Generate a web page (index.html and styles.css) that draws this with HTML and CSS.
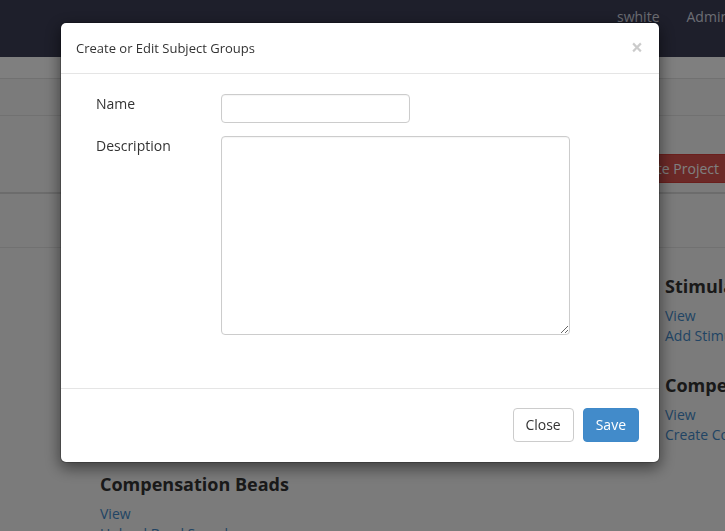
FILE: index.html
```html
<!DOCTYPE html>
<html lang="en">
<head>
<meta charset="utf-8">
<title>Create or Edit Subject Groups</title>
<link rel="stylesheet" href="styles.css">
</head>
<body>
<div class="page">
  <header class="navbar">
    <ul class="nav-right">
      <li><a href="#">swhite</a></li>
      <li><a href="#">Admin</a></li>
    </ul>
  </header>
  <div class="subbar"></div>
  <div class="crumbs"></div>
  <div class="title-area">
    <div class="title-row">
      <h1 class="page-title">Project</h1>
      <button class="btn btn-danger" type="button">Delete Project</button>
    </div>
  </div>
  <div class="tabs"></div>
  <main class="content">
    <div class="col">
      <section class="group">
        <h3>Subjects</h3>
        <a href="#">View</a>
        <a href="#">Add Subject</a>
      </section>
      <section class="group">
        <h3>Samples</h3>
        <a href="#">View</a>
        <a href="#">Add Sample</a>
      </section>
      <section class="group">
        <h3>Compensation Beads</h3>
        <a href="#">View</a>
        <a href="#">Upload Bead Samples</a>
      </section>
    </div>
    <div class="col">
      <section class="group">
        <h3>Sites</h3>
        <a href="#">View</a>
        <a href="#">Add Site</a>
      </section>
      <section class="group">
        <h3>Panels</h3>
        <a href="#">View</a>
        <a href="#">Add Panel</a>
      </section>
    </div>
    <div class="col">
      <section class="group">
        <h3>Stimulations</h3>
        <a href="#">View</a>
        <a href="#">Add Stimulation</a>
      </section>
      <section class="group">
        <h3>Compensations</h3>
        <a href="#">View</a>
        <a href="#">Create Compensation</a>
      </section>
    </div>
  </main>
</div>

<div class="backdrop"></div>
<div class="modal" role="dialog">
  <div class="modal-header">
    <h4 class="modal-title">Create or Edit Subject Groups</h4>
    <button class="close" type="button" aria-label="Close">&times;</button>
  </div>
  <form class="modal-body">
    <label class="form-label" for="name">Name</label>
    <input class="form-input" id="name" type="text">
    <label class="form-label" for="desc">Description</label>
    <textarea class="form-textarea" id="desc"></textarea>
  </form>
  <div class="modal-footer">
    <button class="btn btn-default" type="button">Close</button>
    <button class="btn btn-primary" type="button">Save</button>
  </div>
</div>
</body>
</html>
```

FILE: styles.css
```css
html, body {
  margin: 0;
  padding: 0;
  overflow: hidden;
  height: 100%;
}
body {
  font-family: "Open Sans", "DejaVu Sans", sans-serif;
  font-size: 14px;
  line-height: 20px;
  color: #333;
  background: #f6f6f6;
}
.page {
  width: 1000px;
}
.navbar {
  height: 57px;
  background: #3c3e56;
}
.nav-right {
  list-style: none;
  margin: 0 0 0 617px;
  padding: 7px 0 0;
  display: flex;
  gap: 27px;
}
.nav-right a {
  color: #d8dae4;
  text-decoration: none;
  font-size: 14px;
}
.subbar {
  height: 21px;
  background: #ffffff;
  border-bottom: 1px solid #e2e2e2;
}
.crumbs {
  height: 36px;
  border-bottom: 1px solid #e2e2e2;
}
.title-area {
  height: 76px;
  border-bottom: 2px solid #d8d8d8;
}
.title-row {
  width: 632px;
  padding: 38px 0 0 100px;
  display: flex;
  align-items: center;
  justify-content: space-between;
}
.page-title {
  margin: 0;
  font-size: 24px;
  line-height: 29px;
  font-weight: 700;
}
.btn {
  font-family: "Open Sans", "DejaVu Sans", sans-serif;
  font-size: 14px;
  line-height: 20px;
  padding: 6px 12px;
  border-radius: 4px;
  border: 1px solid transparent;
  cursor: pointer;
}
.btn-danger {
  background: #d9534f;
  border-color: #d43f3a;
  color: #fff;
  line-height: 19px;
  padding: 4px 12px;
  border-radius: 3px 0 0 3px;
}
.tabs {
  height: 53px;
  border-bottom: 1px solid #e2e2e2;
}
.content {
  display: grid;
  grid-template-columns: repeat(3, 282.5px);
  padding: 28px 0 0 100px;
}
.group {
  display: flex;
  flex-direction: column;
  margin-bottom: 29px;
}
.group:last-child {
  margin-bottom: 0;
}
.group h3 {
  margin: 0 0 10px;
  font-size: 18px;
  line-height: 20px;
  font-weight: 700;
  color: #333;
}
.group a {
  color: #4289c8;
  text-decoration: none;
  line-height: 20px;
}

.backdrop {
  position: fixed;
  inset: 0;
  background: rgba(0, 0, 0, 0.5);
}
.modal {
  position: fixed;
  top: 22px;
  left: 60px;
  width: 598px;
  background: #fff;
  border: 1px solid rgba(0, 0, 0, 0.2);
  border-radius: 6px;
  box-shadow: 0 5px 15px rgba(0, 0, 0, 0.5);
  background-clip: padding-box;
}
.modal-header {
  display: flex;
  align-items: center;
  justify-content: space-between;
  padding: 16px 16px 15px 15px;
  border-bottom: 1px solid #e5e5e5;
}
.modal-title {
  margin: 0;
  font-size: 13px;
  line-height: 19px;
  font-weight: 400;
  color: #333;
}
.close {
  border: 0;
  background: none;
  padding: 0;
  margin-top: -2px;
  font-family: "Open Sans", "DejaVu Sans", sans-serif;
  font-size: 21px;
  line-height: 1;
  font-weight: 700;
  color: #000;
  opacity: 0.2;
  cursor: pointer;
}
.modal-body {
  display: grid;
  grid-template-columns: 125px max-content;
  row-gap: 13px;
  margin: 0;
  padding: 20px 35px 53px 35px;
}
.form-label {
  color: #333;
  line-height: 20px;
}
.form-input,
.form-textarea {
  box-sizing: border-box;
  border: 1px solid #ccc;
  border-radius: 4px;
  background: #fff;
  font-family: "Open Sans", "DejaVu Sans", sans-serif;
  font-size: 14px;
  margin: 0;
  padding: 4px 8px;
  box-shadow: inset 0 1px 1px rgba(0, 0, 0, 0.04);
}
.form-input {
  width: 189px;
  height: 29px;
}
.form-textarea {
  width: 349px;
  height: 199px;
  resize: both;
}
.modal-footer {
  display: flex;
  justify-content: flex-end;
  gap: 9px;
  padding: 19px 20px 20px;
  border-top: 1px solid #e5e5e5;
}
.btn-default {
  background: #fff;
  border-color: #ccc;
  color: #333;
  padding-left: 11px;
  padding-right: 12px;
}
.btn-primary {
  background: #428bca;
  border-color: #3f89c9;
  color: #fff;
}
```
